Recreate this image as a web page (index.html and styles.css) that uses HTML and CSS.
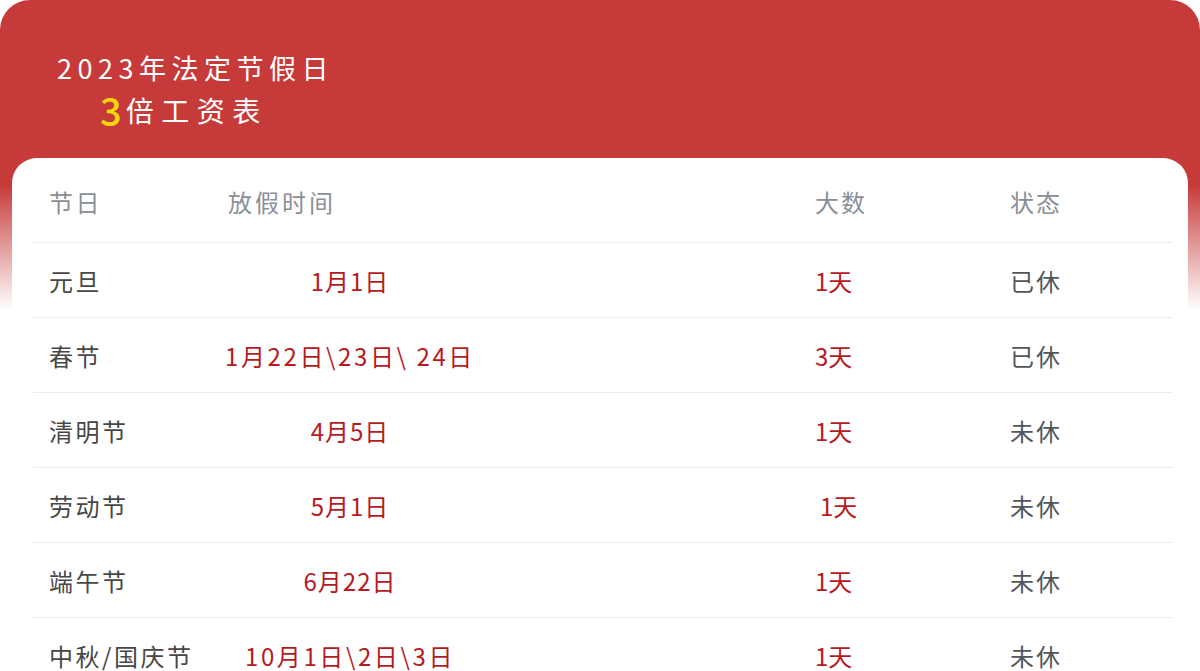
FILE: index.html
```html
<!DOCTYPE html>
<html lang="zh-CN">
<head>
<meta charset="utf-8">
<title>2023年法定节假日 3倍工资表</title>
<link rel="stylesheet" href="styles.css">
</head>
<body>
<div class="panel">
  <div class="title">
    <div class="t1">2023年法定节假日</div>
    <div class="t2"><span class="three">3</span>倍工资表</div>
  </div>
  <div class="card">
    <div class="row head">
      <div class="c1">节日</div>
      <div class="c2">放假时间</div>
      <div class="c3">大数</div>
      <div class="c4">状态</div>
    </div>
    <div class="row">
      <div class="c1 name">元旦</div>
      <div class="c2 date">1月1日</div>
      <div class="c3 days">1天</div>
      <div class="c4 st">已休</div>
    </div>
    <div class="row">
      <div class="c1 name">春节</div>
      <div class="c2 date wide">1月22日\23日\ 24日</div>
      <div class="c3 days">3天</div>
      <div class="c4 st">已休</div>
    </div>
    <div class="row">
      <div class="c1 name">清明节</div>
      <div class="c2 date">4月5日</div>
      <div class="c3 days">1天</div>
      <div class="c4 st">未休</div>
    </div>
    <div class="row">
      <div class="c1 name">劳动节</div>
      <div class="c2 date">5月1日</div>
      <div class="c3 days shift">1天</div>
      <div class="c4 st">未休</div>
    </div>
    <div class="row">
      <div class="c1 name">端午节</div>
      <div class="c2 date">6月22日</div>
      <div class="c3 days">1天</div>
      <div class="c4 st">未休</div>
    </div>
    <div class="row">
      <div class="c1 name">中秋/国庆节</div>
      <div class="c2 date wide">10月1日\2日\3日</div>
      <div class="c3 days">1天</div>
      <div class="c4 st">未休</div>
    </div>
  </div>
</div>
</body>
</html>
```
FILE: styles.css
```css
* { box-sizing: border-box; }
html, body {
  margin: 0;
  padding: 0;
  background: #ffffff;
  overflow: hidden;
}
body {
  font-family: "Noto Sans CJK SC", "Noto Sans", sans-serif;
  width: 1200px;
  height: 671px;
}
.panel {
  width: 1200px;
  height: 671px;
  border-radius: 30px 30px 0 0;
  background: linear-gradient(to bottom, #c73a3a 0, #c73a3a 185px, #ffffff 310px);
  padding-top: 47px;
  overflow: hidden;
}
.title {
  color: #ffffff;
  padding-left: 57px;
  height: 111px;
}
.t1 {
  font-size: 27px;
  line-height: 42px;
  letter-spacing: 5.5px;
}
.t2 {
  font-size: 28px;
  line-height: 42px;
  letter-spacing: 7.5px;
  padding-left: 43px;
  display: flex;
  align-items: center;
}
.three {
  color: #f6d80c;
  font-size: 38px;
  font-weight: 500;
  letter-spacing: 4px;
  line-height: 42px;
}
.card {
  margin: 0 12px;
  background: #ffffff;
  border-radius: 25px 25px 0 0;
  padding: 0 15px 0 21px;
  height: 520px;
}
.row {
  display: grid;
  grid-template-columns: 195px 587px 195px 1fr;
  align-items: center;
  height: 75px;
  border-bottom: 1px solid #ececec;
  font-size: 24px;
  padding-top: 1px;
}
.row.head {
  height: 85px;
  padding-top: 2px;
  color: #8a8f97;
  font-size: 24px;
}
.row.head .c2 {
  letter-spacing: 3px;
}
.c1 {
  padding-left: 16px;
  letter-spacing: 2.5px;
  white-space: nowrap;
}
.c2, .c3, .c4 {
  letter-spacing: 2px;
  white-space: nowrap;
}
.name {
  color: #474747;
}
.date {
  color: #b61a1f;
  width: 244px;
  display: flex;
  justify-content: center;
  letter-spacing: 1px;
}
.date.wide {
  letter-spacing: 2.6px;
}
.days {
  color: #b61a1f;
  letter-spacing: 0;
}
.days.shift {
  padding-left: 5px;
}
.st {
  color: #50565c;
}
```
